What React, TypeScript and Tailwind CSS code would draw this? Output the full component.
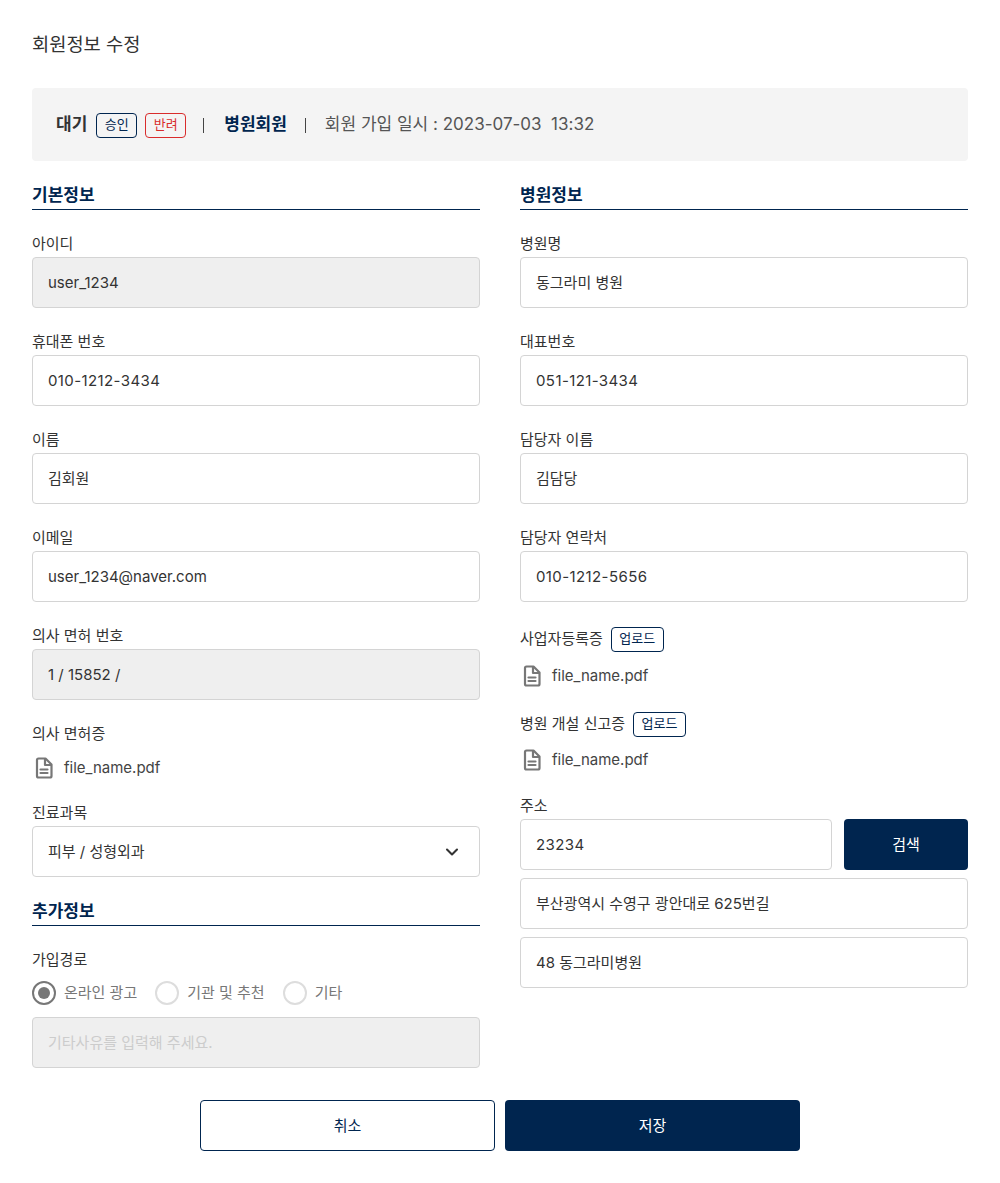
import React from 'react';
import { ChevronDown } from 'lucide-react';

const inputBase = 'h-[51px] w-full rounded border border-[#d4d4d4] px-[15px] pt-px flex items-center text-[15px] text-[#333333]';

function Label({ children }: { children: React.ReactNode }) {
  return <div className="h-[22px] leading-[24px] text-[15px] text-[#333333]">{children}</div>;
}

function Section({ title }: { title: string }) {
  return (
    <div className="h-[27px] border-b border-[#00254f] text-[17px] leading-[25px] font-semibold text-[#00254f]">{title}</div>
  );
}

function Field({ label, value, disabled, numeric }: { label: string; value: string; disabled?: boolean; numeric?: boolean }) {
  return (
    <div className="mt-[22px]">
      <Label>{label}</Label>
      <div className={`mt-[3px] ${inputBase} ${disabled ? 'bg-[#efefef]' : 'bg-white'} ${numeric ? 'tracking-[0.4px]' : ''}`}>{value}</div>
    </div>
  );
}

function FileIcon() {
  return (
    <svg width="24" height="24" viewBox="0 0 24 24" fill="none" stroke="#777777" strokeWidth="2.2" strokeLinejoin="round" strokeLinecap="round">
      <path d="M6.5 2.500h7l6 6V20a1.500 1.500 0 0 1-1.500 1.500H6.500A1.500 1.500 0 0 1 5 20V4a1.500 1.500 0 0 1 1.500-1.500z" />
      <path d="M13 3v6h6" />
      <path d="M8.500 13.500h7M8.500 17h7" />
    </svg>
  );
}

function FileRow() {
  return (
    <div className="flex h-6 items-center gap-2 text-[15px] text-[#444444]">
      <FileIcon />
      <span>file_name.pdf</span>
    </div>
  );
}

function UploadLabel({ label }: { label: string }) {
  return (
    <div className="flex h-6 items-center gap-2 text-[15px] text-[#333333]">
      <span>{label}</span>
      <span className="flex h-[25px] w-[53px] items-center justify-center rounded border border-[#00254f] text-[13px] text-[#00254f]">업로드</span>
    </div>
  );
}

function Radio({ label, checked }: { label: string; checked?: boolean }) {
  return (
    <div className="flex items-center gap-2 text-[15px] text-[#777777]">
      <span className={`flex h-6 w-6 items-center justify-center rounded-full border-2 ${checked ? 'border-[#777777]' : 'border-[#dddddd]'}`}>
        {checked && <span className="h-3 w-3 rounded-full bg-[#777777]" />}
      </span>
      {label}
    </div>
  );
}

export default function App() {
  return (
    <div className="h-[1183px] bg-white px-8 pt-[33px] font-['Inter','Noto_Sans_CJK_KR',sans-serif]">
      <h1 className="h-6 text-[18.700px] leading-6 font-normal text-[#333333]">회원정보 수정</h1>

      <div className="mt-[31px] flex h-[73px] items-center rounded bg-[#f4f4f4] px-6 pt-px text-[17px] text-[#555555]">
        <span className="font-semibold text-[#333333]">대기</span>
        <span className="ml-[9px] flex h-[25px] w-[41px] items-center justify-center rounded border border-[#00254f] text-[13px] text-[#00254f]">승인</span>
        <span className="ml-2 flex h-[25px] w-[41px] items-center justify-center rounded border border-[#d92c2c] text-[13px] text-[#d92c2c]">반려</span>
        <span className="ml-[17px] h-[15px] w-px bg-[#444444]" />
        <span className="ml-[20px] font-semibold text-[#00254f]">병원회원</span>
        <span className="ml-[18px] h-[15px] w-px bg-[#444444]" />
        <span className="ml-[19px] whitespace-pre">회원 가입 일시 : 2023-07-03  13:32</span>
      </div>

      <div className="mt-[22px] grid grid-cols-2 gap-x-10">
        <div>
          <Section title="기본정보" />
          <Field label="아이디" value="user_1234" disabled />
          <Field label="휴대폰 번호" value="010-1212-3434" numeric />
          <Field label="이름" value="김회원" />
          <Field label="이메일" value="user_1234@naver.com" />
          <Field label="의사 면허 번호" value="1 / 15852 /" disabled />
          <div className="mt-[22px]">
            <Label>의사 면허증</Label>
            <div className="mt-[12px]"><FileRow /></div>
          </div>
          <div className="mt-[21px]">
            <Label>진료과목</Label>
            <div className={`mt-[3px] justify-between bg-white ${inputBase}`}>
              <span>피부 / 성형외과</span>
              <ChevronDown size={20} strokeWidth={2.500} color="#333333" className="mr-[2px]" />
            </div>
          </div>
          <div className="mt-[22px]"><Section title="추가정보" /></div>
          <div className="mt-[22px]"><Label>가입경로</Label></div>
          <div className="mt-[11px] flex gap-[18px]">
            <Radio label="온라인 광고" checked />
            <Radio label="기관 및 추천" />
            <Radio label="기타" />
          </div>
          <div className={`mt-[12px] bg-[#efefef] ${inputBase} text-[#cccccc]`}>기타사유를 입력해 주세요.</div>
        </div>

        <div>
          <Section title="병원정보" />
          <Field label="병원명" value="동그라미 병원" />
          <Field label="대표번호" value="051-121-3434" numeric />
          <Field label="담당자 이름" value="김담당" />
          <Field label="담당자 연락처" value="010-1212-5656" numeric />
          <div className="mt-[25px]"><UploadLabel label="사업자등록증" /></div>
          <div className="mt-[13px]"><FileRow /></div>
          <div className="mt-[24px]"><UploadLabel label="병원 개설 신고증" /></div>
          <div className="mt-[12px]"><FileRow /></div>
          <div className="mt-[22px]"><Label>주소</Label></div>
          <div className="mt-[3px] flex gap-3">
            <div className={`flex-1 bg-white ${inputBase} tracking-[0.400px]`}>23234</div>
            <button className="h-[51px] w-[124px] rounded bg-[#00254f] pt-px text-[15px] text-white">검색</button>
          </div>
          <div className={`mt-2 bg-white ${inputBase}`}>부산광역시 수영구 광안대로 625번길</div>
          <div className={`mt-2 bg-white ${inputBase}`}>48 동그라미병원</div>
        </div>
      </div>

      <div className="mt-8 flex justify-center gap-[10px]">
        <button className="h-[51px] w-[295px] rounded border border-[#00254f] bg-white pt-px text-[15px] text-[#00254f]">취소</button>
        <button className="h-[51px] w-[295px] rounded bg-[#00254f] pt-px text-[15px] text-white">저장</button>
      </div>
    </div>
  );
}
